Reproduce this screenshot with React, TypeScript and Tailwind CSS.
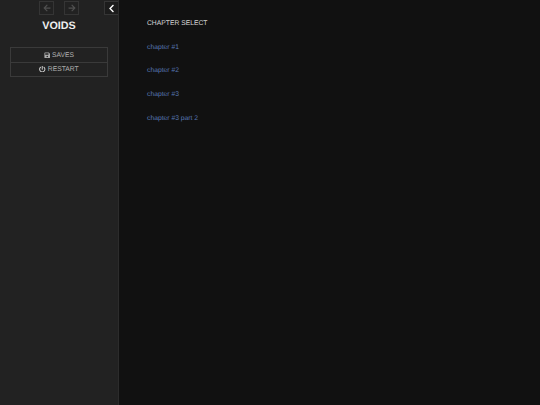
import { FaArrowLeft, FaArrowRight, FaChevronLeft, FaSave, FaPowerOff } from "react-icons/fa";

const chapters = ["chapter #1", "chapter #2", "chapter #3", "chapter #3 part 2"];

export default function App() {
  return (
    <div className="flex h-[405px] w-[540px] overflow-hidden bg-[#111111] font-['Liberation_Sans',sans-serif] [text-rendering:geometricPrecision]">
      <aside className="flex h-full w-[119px] shrink-0 flex-col border-r border-[#2c2c2c] bg-[#222222]">
        <div className="flex h-[16px] items-start pt-[1px]">
          <div className="ml-[39px] flex gap-[10px]">
            <div className="flex h-[14px] w-[15px] items-center justify-center border border-[#353535]">
              <FaArrowLeft size={8} className="text-[#505050]" />
            </div>
            <div className="flex h-[14px] w-[15px] items-center justify-center border border-[#353535]">
              <FaArrowRight size={8} className="text-[#505050]" />
            </div>
          </div>
          <div className="ml-[25px] flex h-[14px] w-[14px] items-center justify-center border border-r-0 border-[#353535] bg-[#1c1c1c]">
            <FaChevronLeft size={9} className="text-white" />
          </div>
        </div>
        <h1 className="mt-[2px] text-center text-[10.8px] font-bold leading-[16px] text-[#eeeeee]">VOIDS</h1>
        <div className="mx-[10px] mt-[13px] flex flex-col border border-[#3a3a3a]">
          <div className="flex h-[14px] items-center justify-center gap-[1.5px] text-[6.75px] leading-[8px] text-[#b0b0b0]">
            <FaSave size={6.5} className="text-[#aaaaaa]" />
            <span className="mt-[1px]">SAVES</span>
          </div>
          <div className="flex h-[14px] items-center justify-center gap-[2px] border-t border-[#3a3a3a] text-[6.75px] leading-[8px] text-[#b0b0b0]">
            <FaPowerOff size={6.5} className="-mt-[1px] text-[#cccccc]" />
            <span>RESTART</span>
          </div>
        </div>
      </aside>
      <main className="flex-1 pl-[28px] pt-[19px] text-[6.75px] leading-[10px]">
        <p className="text-[#d4d4d4]">CHAPTER SELECT</p>
        <div className="mt-[13.5px] flex flex-col gap-[13.7px]">
          {chapters.map((c) => (
            <a key={c} className="text-[#5878b4]">
              {c}
            </a>
          ))}
        </div>
      </main>
    </div>
  );
}
